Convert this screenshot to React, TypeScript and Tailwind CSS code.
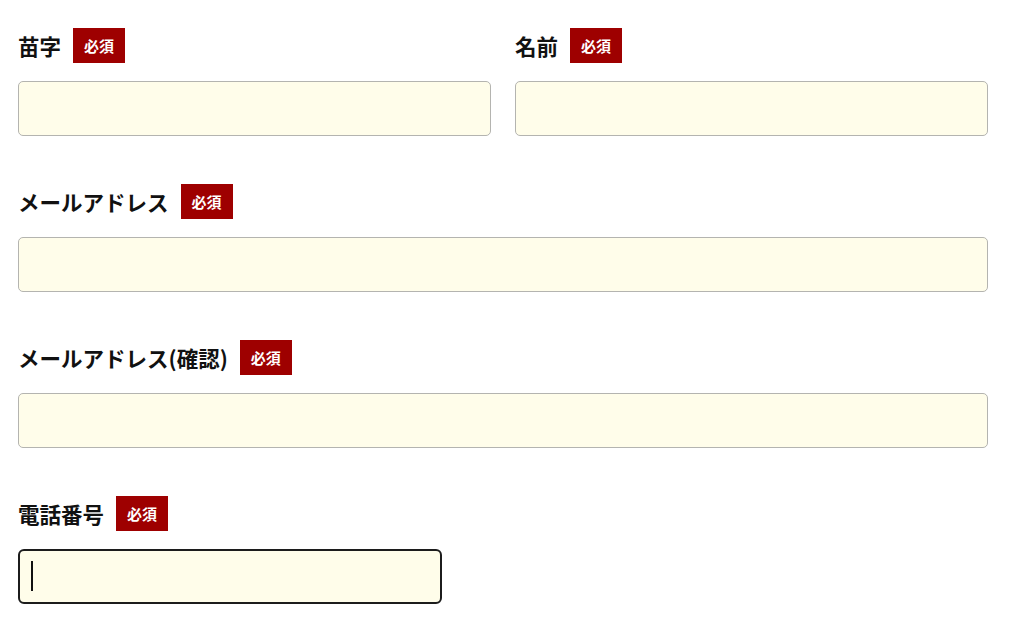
import React from 'react'

type Field = {
  label: string
  wide?: boolean
}

function Required() {
  return (
    <span className="flex h-[35px] w-[52px] items-center justify-center bg-[#9e0000] text-[15px] font-bold leading-none text-white">
      必須
    </span>
  )
}

function Label({ text }: { text: string }) {
  return (
    <div className="mb-[18px] flex h-[35px] items-center gap-3">
      <span className="text-[21.5px] font-bold leading-none text-[#111]">{text}</span>
      <Required />
    </div>
  )
}

function TextBox() {
  return (
    <input
      readOnly
      className="block h-[55px] w-full rounded-[5px] border border-[#b4b4b0] bg-[#fffdea] px-3 outline-none"
    />
  )
}

const fields: Field[] = [
  { label: 'メールアドレス', wide: true },
  { label: 'メールアドレス(確認)', wide: true },
]

export default function App() {
  return (
    <div
      className="min-h-[617px] bg-white pl-[18px] pt-[28px]"
      style={{ fontFamily: '"Noto Sans CJK JP", "Noto Sans", sans-serif' }}
    >
      <div className="flex w-[970px] flex-col gap-[48px]">
        <div className="grid grid-cols-2 gap-x-[24px]">
          <div>
            <Label text="苗字" />
            <TextBox />
          </div>
          <div>
            <Label text="名前" />
            <TextBox />
          </div>
        </div>

        {fields.map((f) => (
          <div key={f.label}>
            <Label text={f.label} />
            <TextBox />
          </div>
        ))}

        <div>
          <Label text="電話番号" />
          <div className="relative h-[55px] w-[424px] rounded-[6px] border-2 border-[#1c1c1c] bg-[#fffdea]">
            <span className="absolute left-[11px] top-[10px] h-[30px] w-[2px] bg-[#111]" />
          </div>
        </div>
      </div>
    </div>
  )
}
